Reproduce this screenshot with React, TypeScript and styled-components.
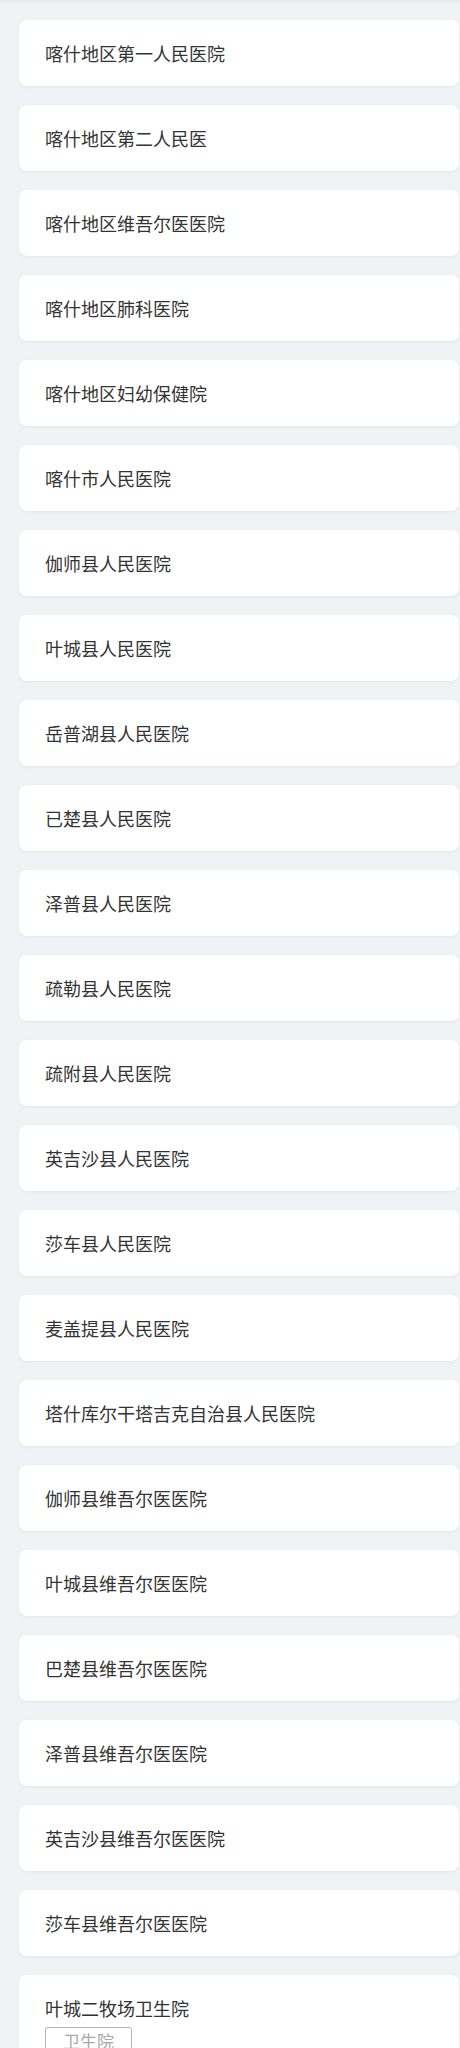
import React from "react";
import styled, { createGlobalStyle } from "styled-components";

const Global = createGlobalStyle`
  html, body { margin: 0; padding: 0; background: #eff3f6; }
  body { font-family: "Noto Sans CJK SC", "Noto Sans", sans-serif; }
`;

const Page = styled.div`
  border-top: 3px solid #e7ecef;
  padding: 17px 1px 20px 19px;
  display: flex;
  flex-direction: column;
  gap: 19px;
`;

const Card = styled.div`
  background: #ffffff;
  border-radius: 8px;
  box-shadow: 0 1px 3px rgba(40, 60, 80, 0.07);
  padding: 20px 26px 20px 26px;
  min-height: 26px;
  display: flex;
  flex-direction: column;
  align-items: flex-start;
`;

const Name = styled.div`
  font-size: 18px;
  line-height: 26px;
  color: #333333;
`;

const Tag = styled.span`
  margin-top: 6px;
  border: 1px solid #b5b5b5;
  border-radius: 3px;
  padding: 1px 17px;
  font-size: 17px;
  line-height: 24px;
  color: #a8a8a8;
`;

const items: { name: string; tag?: string }[] = [
  { name: "喀什地区第一人民医院" },
  { name: "喀什地区第二人民医" },
  { name: "喀什地区维吾尔医医院" },
  { name: "喀什地区肺科医院" },
  { name: "喀什地区妇幼保健院" },
  { name: "喀什市人民医院" },
  { name: "伽师县人民医院" },
  { name: "叶城县人民医院" },
  { name: "岳普湖县人民医院" },
  { name: "已楚县人民医院" },
  { name: "泽普县人民医院" },
  { name: "疏勒县人民医院" },
  { name: "疏附县人民医院" },
  { name: "英吉沙县人民医院" },
  { name: "莎车县人民医院" },
  { name: "麦盖提县人民医院" },
  { name: "塔什库尔干塔吉克自治县人民医院" },
  { name: "伽师县维吾尔医医院" },
  { name: "叶城县维吾尔医医院" },
  { name: "巴楚县维吾尔医医院" },
  { name: "泽普县维吾尔医医院" },
  { name: "英吉沙县维吾尔医医院" },
  { name: "莎车县维吾尔医医院" },
  { name: "叶城二牧场卫生院", tag: "卫生院" },
];

export default function App() {
  return (
    <>
      <Global />
      <Page>
        {items.map((it, i) => (
          <Card key={i}>
            <Name>{it.name}</Name>
            {it.tag && <Tag>{it.tag}</Tag>}
          </Card>
        ))}
      </Page>
    </>
  );
}
